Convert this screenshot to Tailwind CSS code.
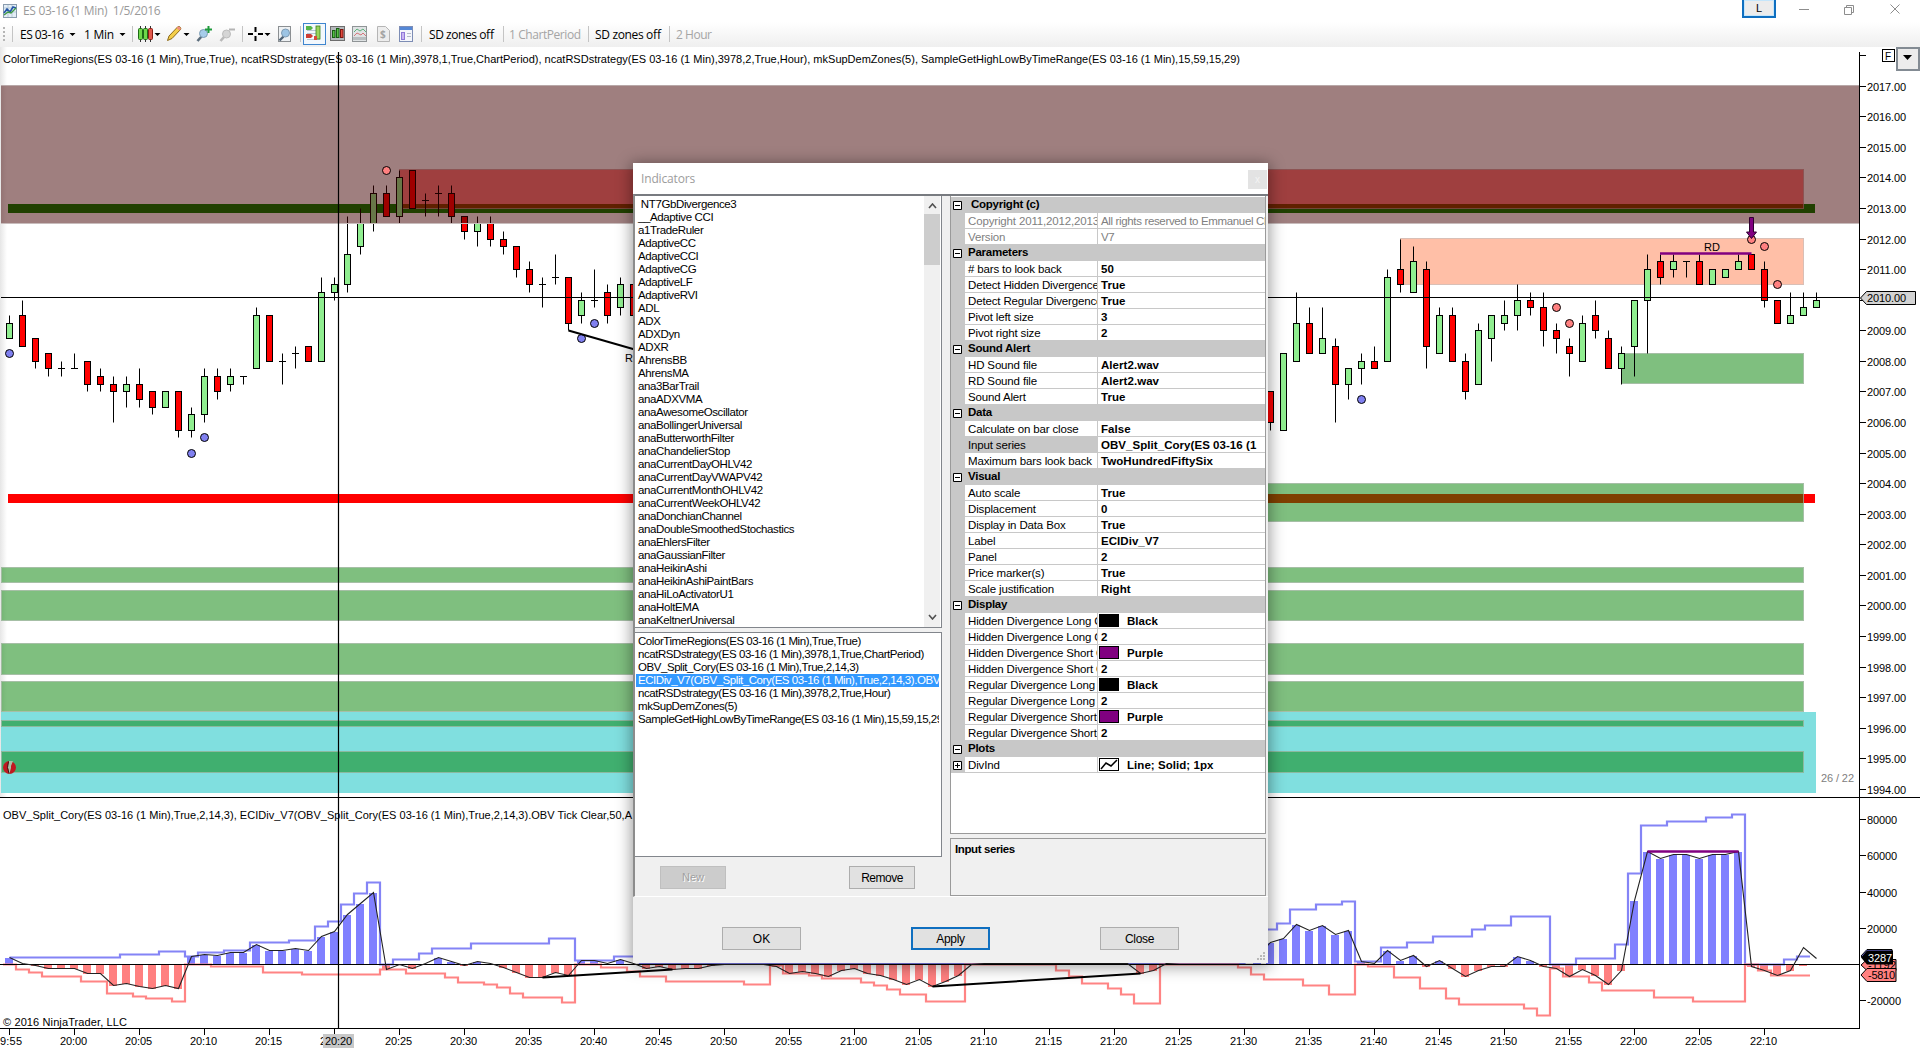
<!DOCTYPE html>
<html lang="en">
<head>
  <meta charset="UTF-8" />
  <meta name="viewport" content="width=device-width, initial-scale=1" />
  <title>ES 03-16 (1 Min)</title>
  <script src="https://cdn.jsdelivr.net/npm/@tailwindcss/browser@4"></script>
</head>
<body class="relative flex h-[1054px] w-[1920px] flex-col overflow-hidden bg-white font-['Liberation_Sans',Arial,sans-serif] text-[11px] text-black">

  <!-- Title bar -->
  <header class="flex h-[22px] shrink-0 items-start justify-between">
    <div class="flex items-center gap-[6px] pl-[3px] pt-[2px]">
      <svg width="14" height="15" viewBox="0 0 14 15">
        <rect x=".5" y="1.5" width="13" height="13" fill="#e4eef6" stroke="#8a9cae" />
        <path d="M1 5h12M1 9h12M5 2v12M9 2v12" stroke="#b9cbda" />
        <path d="M1 10l3-4 3 3 3-5 3 1" fill="none" stroke="#2456a8" stroke-width="1.6" />
        <path d="M1 12l4-3 3 1 5-5" fill="none" stroke="#3f9a45" stroke-width="1.4" />
      </svg>
      <span class="whitespace-pre font-['Open_Sans',sans-serif] text-[12px] leading-[17px] tracking-[-0.3px] text-[#9a9a9a]">ES 03-16 (1 Min)  1/5/2016</span>
    </div>
    <div class="flex items-start">
      <div class="flex h-[18px] w-[34px] items-start justify-center border-2 border-t-0 border-[#0f6fc0] bg-[#ececec] text-[11px] shadow-[inset_0_0_0_1px_#c5e6fb]">L</div>
      <svg class="ml-[22px] mt-[3px]" width="106" height="14" viewBox="0 0 106 14" fill="none" stroke="#8d8d8d">
        <path d="M1 6.500h10" />
        <path d="M46.500 4.500h7v7h-7zM48.500 4.500v-2h7v7h-2" />
        <path d="M92.500 1.500l9 9M101.500 1.500l-9 9" />
      </svg>
      <div class="w-[16px]"></div>
    </div>
  </header>

  <!-- Toolbar -->
  <nav class="flex h-[25px] shrink-0 items-center bg-linear-to-b from-white to-[#efefef] font-['Open_Sans',sans-serif] text-[12px]">
    <svg class="shrink-0" width="428" height="25" viewBox="0 0 428 25">
      <g fill="#b5b5b5">
        <rect x="3" y="5" width="2" height="2" /><rect x="3" y="9" width="2" height="2" /><rect x="3" y="13" width="2" height="2" /><rect x="3" y="17" width="2" height="2" />
      </g>
      <path d="M12.500 4v16M132.500 4v16M242.500 4v16M300.500 4v16M421.500 4v16" stroke="#c4c4c4" />
      <g fill="#000" font-family="Open Sans, sans-serif" font-size="12">
        <text x="20" y="16.500" textLength="44">ES 03-16</text>
        <text x="84" y="16.500" textLength="30">1 Min</text>
        <path d="M69.500 11h6l-3 3zM119.500 11h6l-3 3zM154.500 11h6l-3 3zM183.500 11h6l-3 3zM264.500 11h6l-3 3z" />
      </g>
      <!-- candle style -->
      <path d="M140.500 4v16M145.500 4v16M150.500 4v16" stroke="#333" />
      <rect x="138.500" y="6.500" width="4" height="11" rx="1" fill="#6fd84a" stroke="#1d6b16" />
      <rect x="143.500" y="6.500" width="4" height="11" rx="1" fill="#6fd84a" stroke="#1d6b16" />
      <rect x="148.500" y="6.500" width="4" height="11" rx="1" fill="#e2594d" stroke="#8c1d14" />
      <!-- pencil -->
      <path d="M167.500 18.500l1.500-4.500 9-9.500q2.500-.5 3 2.500l-9 9.500z" fill="#f4cf4a" stroke="#8d6a1a" />
      <path d="M178 4.500q2.500-.5 3 2.500l-1.500 1.500-3-2.500z" fill="#ef8f80" />
      <!-- zoom in, zoom out -->
      <path d="M197.500 19l4-4.500" stroke="#5b6d7c" stroke-width="2.600" />
      <circle cx="203.500" cy="11.500" r="4" fill="#a7cdea" stroke="#7f9db4" />
      <path d="M208.500 4v7M205 7.500h7" stroke="#1f9b3c" stroke-width="2" />
      <path d="M220.500 19l4-4.500" stroke="#b9b9b9" stroke-width="2.600" />
      <circle cx="226.500" cy="12" r="4" fill="#d5d5d5" stroke="#bcbcbc" />
      <path d="M229 7.500h6" stroke="#b4b4b4" stroke-width="2" />
      <!-- crosshair -->
      <path d="M255.500 5v5M255.500 14v5M248 12h5M258 12h5" stroke="#000" stroke-width="2" />
      <!-- data box lens -->
      <rect x="278.500" y="4.500" width="12" height="15" fill="#eef1f3" stroke="#8b8f92" />
      <path d="M279.500 18.500l4-4" stroke="#4d6275" stroke-width="2.400" />
      <circle cx="285.500" cy="11" r="4" fill="#9cc4e4" stroke="#7e9bb3" />
      <!-- chart trader, active -->
      <rect x="303.500" y="1.500" width="22" height="21" fill="#f3f8fd" stroke="#3f86cf" />
      <path d="M307 8.500h13M307 11.500h13M307 17.500h13" stroke="#b8c6d3" />
      <path d="M306 4h5l2 2-2 2h-5z" fill="#56b548" />
      <path d="M306 12h5l2 2-2 2h-5z" fill="#cf3c35" />
      <rect x="316" y="4" width="4" height="13" fill="#9ad45a" stroke="#3c7f1f" stroke-width=".8" />
      <rect x="314" y="14" width="3" height="4" fill="#d84a3a" />
      <!-- bars on grey -->
      <rect x="330.500" y="4.500" width="14" height="14" fill="#b5b9bc" stroke="#6d6d6d" />
      <rect x="332.500" y="8.500" width="2.500" height="7" fill="#54c044" stroke="#185d12" />
      <rect x="336.500" y="6.500" width="2.500" height="9" fill="#54c044" stroke="#185d12" />
      <rect x="340.500" y="7.500" width="2.500" height="8" fill="#e2493d" stroke="#7d1710" />
      <!-- line chart -->
      <rect x="352.500" y="4.500" width="14" height="15" fill="#dfe3e4" stroke="#8f9496" />
      <path d="M353 16.500h13" stroke="#b9bec0" stroke-width="3" />
      <path d="M354 10l3-3 3 2 3-2 3 3" fill="none" stroke="#5fb07b" />
      <path d="M354 14l3-3 4 2 2-2 3 3" fill="none" stroke="#d4767a" />
      <!-- account -->
      <path d="M377.500 4.500h8l4 4v11h-12z" fill="#ededed" stroke="#b5b5b5" />
      <text x="380" y="16" font-size="10" font-weight="700" fill="#a3a3a3">$</text>
      <!-- properties -->
      <rect x="399.500" y="4.500" width="13" height="15" fill="#f4f6fb" stroke="#7d8db5" />
      <rect x="400" y="5" width="12" height="3" fill="#5487d6" />
      <rect x="401.500" y="10.500" width="3" height="7" fill="#c9b6f2" stroke="#8f78d8" />
      <path d="M407 11.500h4M407 14.500h4" stroke="#b3b9c9" />
    </svg>
    <svg class="shrink-0" width="320" height="25" viewBox="428 0 320 25" font-family="Open Sans, sans-serif" font-size="12">
      <path d="M503.500 4v16M588.500 4v16M669.500 4v16" stroke="#c4c4c4" />
      <text x="429" y="16.500" textLength="65">SD zones off</text>
      <text x="509" y="16.500" textLength="72" fill="#a5a5a5">1 ChartPeriod</text>
      <text x="595" y="16.500" textLength="66">SD zones off</text>
      <text x="676" y="16.500" textLength="36" fill="#a5a5a5">2 Hour</text>
    </svg>
  </nav>

  <!-- Chart -->
  <main class="h-[1007px] shrink-0">
    <svg id="chart" class="block" width="1920" height="1007" viewBox="0 47 1920 1007" font-family="Liberation Sans, Arial, sans-serif" font-size="11"></svg>
  </main>

  <!-- Indicators dialog -->
  <section class="absolute left-[633px] top-[163px] flex h-[800px] w-[635px] flex-col bg-[#f0f0f0] shadow-[0_2px_14px_2px_rgba(0,0,0,0.38)]">
    <div class="flex h-[31px] shrink-0 items-center justify-between bg-white pl-[8px]">
      <span class="font-['Open_Sans',sans-serif] text-[12px] tracking-[-0.15px] text-[#9c9c9c]">Indicators</span>
      <span class="mr-[1px] mt-[2px] flex h-[19px] w-[19px] items-center justify-center bg-[#e3e3e3] text-[10px] text-[#f3f3f3]">x</span>
    </div>

    <div class="flex h-[703px] shrink-0 border-b border-l-2 border-t-2 border-b-white border-l-[#8c8c8c] border-t-[#787b80]">
      <!-- Left column: available and applied indicators -->
      <div class="flex w-[307px] shrink-0 flex-col">
        <div class="flex h-[432px] shrink-0 justify-between border-b border-r border-[#82868c] bg-white">
          <ul id="available" class="pl-[3px] pt-[2px]"></ul>
          <div class="mr-[1px] flex w-[16px] flex-col items-center bg-[#f0f0f0] py-[7px]">
            <svg width="9" height="6" viewBox="0 0 9 6" fill="none" stroke="#505050" stroke-width="1.600"><path d="M1 5l3.500-4L8 5" /></svg>
            <div class="mt-[5px] h-[51px] w-[16px] bg-[#cdcdcd]"></div>
            <svg class="mt-auto" width="9" height="6" viewBox="0 0 9 6" fill="none" stroke="#505050" stroke-width="1.600"><path d="M1 1l3.500 4L8 1" /></svg>
          </div>
        </div>
        <div class="mt-[4px] h-[225px] shrink-0 border-y border-r border-[#82868c] bg-white">
          <ul id="applied" class="w-[305px] overflow-hidden pl-[1px] pr-[1px] pt-[2px]"></ul>
        </div>
        <div class="flex justify-between pl-[25px] pr-[27px] pt-[9px]">
          <button class="h-[23px] w-[66px] border border-[#bfbfbf] bg-[#cccccc] text-[11px] text-[#a0a0a0] [text-shadow:1px_1px_0_#fff]">New</button>
          <button class="h-[23px] w-[66px] border border-[#adadad] bg-[#e1e1e1] text-[12px] tracking-[-0.5px]">Remove</button>
        </div>
      </div>

      <!-- Right column: property grid -->
      <div class="ml-[8px] flex w-[316px] flex-col">
        <div class="h-[638px] shrink-0 border border-t-0 border-[#9a9a9a] bg-white pt-[1px]">
          <div id="props"></div>
        </div>
        <div class="mt-[4px] h-[58px] shrink-0 border border-[#9a9a9a] pl-[4px] pt-[2px] text-[11.5px] font-bold tracking-[-0.4px]">Input series</div>
      </div>
    </div>

    <div class="relative flex justify-between pl-[89px] pr-[89px] pt-[30px] text-[12px]">
      <button class="h-[23px] w-[79px] border border-[#adadad] bg-[#e1e1e1]">OK</button>
      <button class="h-[23px] w-[79px] border-2 border-[#0f6fc0] bg-[#e1e1e1] tracking-[-0.3px]">Apply</button>
      <button class="h-[23px] w-[79px] border border-[#adadad] bg-[#e1e1e1] tracking-[-0.3px]">Close</button>
      <svg class="absolute right-[2px] top-[55px]" width="9" height="9" viewBox="0 0 9 9" fill="#b8b8b8">
        <rect x="6" y="0" width="2" height="2" /><rect x="3" y="3" width="2" height="2" /><rect x="6" y="3" width="2" height="2" />
        <rect x="0" y="6" width="2" height="2" /><rect x="3" y="6" width="2" height="2" /><rect x="6" y="6" width="2" height="2" />
      </svg>
    </div>
  </section>

<script>
// ---------- Dialog lists ----------
const available = [' NT7GbDivergence3', '__Adaptive CCI', 'a1TradeRuler', 'AdaptiveCC', 'AdaptiveCCI', 'AdaptiveCG', 'AdaptiveLF',
  'AdaptiveRVI', 'ADL', 'ADX', 'ADXDyn', 'ADXR', 'AhrensBB', 'AhrensMA', 'ana3BarTrail', 'anaADXVMA', 'anaAwesomeOscillator',
  'anaBollingerUniversal', 'anaButterworthFilter', 'anaChandelierStop', 'anaCurrentDayOHLV42', 'anaCurrentDayVWAPV42',
  'anaCurrentMonthOHLV42', 'anaCurrentWeekOHLV42', 'anaDonchianChannel', 'anaDoubleSmoothedStochastics', 'anaEhlersFilter',
  'anaGaussianFilter', 'anaHeikinAshi', 'anaHeikinAshiPaintBars', 'anaHiLoActivatorU1', 'anaHoltEMA', 'anaKeltnerUniversal'];
document.getElementById('available').innerHTML = available.map(t =>
  `<li class="h-[13px] whitespace-pre text-[11.5px] leading-[13px] tracking-[-0.38px]">${t}</li>`).join('');

const applied = ['ColorTimeRegions(ES 03-16 (1 Min),True,True)', 'ncatRSDstrategy(ES 03-16 (1 Min),3978,1,True,ChartPeriod)',
  'OBV_Split_Cory(ES 03-16 (1 Min),True,2,14,3)', 'ECIDiv_V7(OBV_Split_Cory(ES 03-16 (1 Min),True,2,14,3).OBV',
  'ncatRSDstrategy(ES 03-16 (1 Min),3978,2,True,Hour)', 'mkSupDemZones(5)', 'SampleGetHighLowByTimeRange(ES 03-16 (1 Min),15,59,15,29'];
document.getElementById('applied').innerHTML = applied.map((t, i) =>
  `<li class="h-[13px] overflow-hidden whitespace-pre pl-[2px] text-[11.5px] leading-[13px] tracking-[-0.44px] ${i === 3 ? 'bg-[#3399ff] text-white' : ''}">${t}</li>`).join('');

// A plain string opens a category, an array is [name, value, swatch]
const props = [' Copyright (c)', ['Copyright 2011,2012,2013', 'All rights reserved to Emmanuel Chri', 'off'], ['Version', 'V7', 'off'],
  'Parameters', ['# bars to look back', '50'], ['Detect Hidden Divergence', 'True'], ['Detect Regular Divergence', 'True'],
  ['Pivot left size', '3'], ['Pivot right size', '2'],
  'Sound Alert', ['HD Sound file', 'Alert2.wav'], ['RD Sound file', 'Alert2.wav'], ['Sound Alert', 'True'],
  'Data', ['Calculate on bar close', 'False'], ['Input series', 'OBV_Split_Cory(ES 03-16 (1'], ['Maximum bars look back', 'TwoHundredFiftySix'],
  'Visual', ['Auto scale', 'True'], ['Displacement', '0'], ['Display in Data Box', 'True'], ['Label', 'ECIDiv_V7'], ['Panel', '2'],
  ['Price marker(s)', 'True'], ['Scale justification', 'Right'],
  'Display', ['Hidden Divergence Long C', 'Black', 'black'], ['Hidden Divergence Long C', '2'],
  ['Hidden Divergence Short C', 'Purple', 'purple'], ['Hidden Divergence Short C', '2'],
  ['Regular Divergence Long', 'Black', 'black'], ['Regular Divergence Long', '2'],
  ['Regular Divergence Short', 'Purple', 'purple'], ['Regular Divergence Short', '2'],
  'Plots', ['DivInd', 'Line; Solid; 1px', 'line']];
const box = plus => `<svg width="9" height="9" viewBox="0 0 9 9" fill="#fff" stroke="#000"><path d="M.5.5h8v8h-8zM2 4.500h5${plus ? 'M4.500 2v5' : ''}" /></svg>`;
const swatch = {
  black: '<span class="mr-[8px] h-[13px] w-[20px] shrink-0 bg-black"></span>',
  purple: '<span class="mr-[8px] h-[13px] w-[20px] shrink-0 border border-black bg-[#800080]"></span>',
  line: '<svg class="mr-[8px] shrink-0" width="20" height="13" viewBox="0 0 20 13"><rect x=".5" y=".5" width="19" height="12" fill="#fff" stroke="#000"/><path d="M2 11l5-6 5 3 6-6" fill="none" stroke="#000" stroke-width="1.500"/></svg>'
};
document.getElementById('props').innerHTML = props.map(p => {
  if (typeof p === 'string') {
    return `<div class="flex h-[16px] items-center bg-[#c8c8c8] pl-[2px]">${box(false)}<span class="ml-[6px] whitespace-pre text-[11.5px] font-bold tracking-[-0.25px]">${p}</span></div>`;
  }
  const [name, value, kind] = p;
  return `<div class="flex h-[16px]">
    <div class="flex w-[14px] shrink-0 items-center bg-[#c8c8c8] pl-[2px]">${name === 'DivInd' ? box(true) : ''}</div>
    <div class="w-[133px] shrink-0 overflow-hidden whitespace-nowrap border-b border-r border-[#c8c8c8] pl-[3px] text-[11.5px] leading-[16px] tracking-[-0.15px] ${name === 'Input series' ? 'bg-[#c8c8c8]' : ''} ${kind === 'off' ? 'text-[#808080]' : ''}">${name}</div>
    <div class="flex grow items-center overflow-hidden whitespace-nowrap border-b border-[#c8c8c8] text-[11.5px] leading-[16px] ${kind === 'off' ? 'tracking-[-0.35px] text-[#808080]' : 'font-bold tracking-[0.05px]'} ${swatch[kind] ? 'pl-[1px]' : 'pl-[3px]'}">${swatch[kind] || ''}${value}</div>
  </div>`;
}).join('');

// ---------- Chart ----------
const X = m => 74.5 + 13 * m;                                  // minutes after 20:00
const Y = p => Math.round(85.7 + (2017 - p) * 30.57) + 0.5;    // price panel
const V = v => 964.5 - v;                                      // volume panel, px above zero
const out = [];
const rect = (x1, y1, x2, y2, fill, extra = '') => out.push(`<rect x="${x1}" y="${y1}" width="${x2 - x1}" height="${y2 - y1}" fill="${fill}" shape-rendering="crispEdges" ${extra}/>`);
const line = (x1, y1, x2, y2, c = '#000', w = 1) => out.push(`<line x1="${x1}" y1="${y1}" x2="${x2}" y2="${y2}" stroke="${c}" stroke-width="${w}"/>`);
const text = (x, y, s, w, extra = '') => out.push(`<text x="${x}" y="${y}" ${w ? `textLength="${w}"` : ''} ${extra}>${s}</text>`);

// Zones
out.push('<defs><linearGradient id="edge"><stop offset="0" stop-color="#e6e6e6"/><stop offset="1" stop-color="#fff"/></linearGradient></defs>');
rect(0, 47, 7, 797, 'url(#edge)');
rect(8, 204, 1815, 213, '#008000');
rect(8, 494, 1815, 503, '#ff0000');
rect(1, 712, 1816, 793, '#80dfdf');
const zone = (x1, y1, x2, y2, c) => {
  rect(x1, y1, x2, y2, c, 'fill-opacity="0.5"');
  out.push(`<rect x="${x1 + .5}" y="${y1 + .5}" width="${x2 - x1 - 1}" height="${y2 - y1 - 1}" fill="none" stroke="#c0c0c0" stroke-opacity="0.6"/>`);
};
zone(399, 169, 1804, 209, '#ff0000');
zone(1400, 238, 1804, 285, '#ff7f50');
zone(1621, 353, 1804, 384, '#008000');
zone(1000, 483, 1804, 522, '#008000');
[[567, 583], [590, 621], [643, 675], [681, 712], [720, 727], [751, 773]].forEach(([a, b]) => zone(1, a, 1804, b, '#008000'));

// Candles: minute, high, open, close, low
const candles = [
  [-5,2009.5,2008.75,2009.25,2008.75],[-4,2010,2009.5,2008.5,2008.5],[-3,2008.75,2008.75,2008,2007.75],[-2,2008.25,2008.25,2007.75,2007.5],
  [-1,2008,2007.75,2007.75,2007.5],[0,2008.25,2007.75,2007.75,2007.75],[1,2008,2008,2007.25,2007],[2,2007.75,2007.5,2007.25,2007],
  [3,2007.5,2007.25,2007,2006],[4,2007.5,2007,2007.25,2006.5],[5,2007.75,2007.25,2006.75,2006.5],[6,2007,2007,2006.5,2006.25],
  [7,2007,2006.5,2007,2006.5],[8,2007,2007,2005.75,2005.5],[9,2006.5,2005.75,2006.25,2005.5],[10,2007.75,2006.25,2007.5,2006],
  [11,2007.75,2007.5,2007,2006.75],[12,2007.75,2007.25,2007.5,2007],[13,2007.5,2007.5,2007.5,2007.25],[14,2009.75,2007.75,2009.5,2007.75],
  [15,2009.5,2009.5,2008,2008],[16,2008.25,2008,2008,2007.25],[17,2008.5,2008.25,2008.25,2007.75],[18,2008.5,2008.5,2008,2008],
  [19,2010.75,2008,2010.25,2008],[20,2010.75,2010.25,2010.5,2010],[21,2012.75,2010.5,2011.5,2010.25],[22,2013,2011.75,2012.5,2011.5],
  [23,2013.75,2012.5,2013.5,2012.25],[24,2013.75,2013.5,2012.75,2012.75],[25,2014.25,2012.75,2014,2012.5],[26,2014.25,2014.25,2013,2013],
  [27,2013.5,2013.25,2013.25,2012.75],[28,2013.75,2013.5,2013.5,2012.75],[29,2013.75,2013.5,2012.75,2012.5],[30,2012.75,2012.75,2012.25,2012],
  [31,2012.75,2012.25,2012.5,2011.75],[32,2012.75,2012.5,2012,2011.75],[33,2012.25,2012,2011.75,2011.5],[34,2011.75,2011.75,2011,2010.75],
  [35,2011.25,2011,2010.5,2010.25],[36,2010.75,2010.5,2010.5,2009.75],[37,2011.5,2010.75,2010.75,2010.5],[38,2010.75,2010.75,2009.25,2009],
  [39,2010.25,2009.5,2010,2009.25],[40,2011,2010,2010,2009.75],[41,2010.5,2010.25,2009.5,2009.25],[42,2010.75,2009.75,2010.5,2009.5],
  [43,2010.5,2010.5,2009.5,2009.5],
  [92,2007,2007,2006,2005.75],[93,2008.25,2005.75,2008.25,2005.75],[94,2010.25,2008,2009.25,2008],[95,2009.75,2009.25,2008.25,2008.25],
  [96,2009.75,2008.25,2008.75,2008.25],[97,2008.75,2008.5,2007.25,2006],[98,2007.75,2007.25,2007.75,2006.75],[99,2008.25,2007.75,2008,2007.25],
  [100,2008.5,2008,2007.75,2007.75],[101,2011,2008,2010.75,2008],[102,2012,2011,2010.5,2010.25],[103,2011.75,2010.25,2011.25,2010.25],
  [104,2011.25,2011,2008.5,2007.75],[105,2009.75,2008.25,2009.5,2008.25],[106,2009.75,2009.5,2008,2008],[107,2008.25,2008,2007,2006.75],
  [108,2009.25,2007.25,2009,2007.25],[109,2009.5,2008.75,2009.5,2008],[110,2010,2009.25,2009.5,2009],[111,2010.5,2009.5,2010,2009],
  [112,2010.25,2010,2009.75,2009.5],[113,2010.25,2009.75,2009,2008.5],[114,2009.25,2009,2008.75,2008.25],[115,2008.75,2008.5,2008.25,2007.5],
  [116,2009.5,2008,2009.25,2008],[117,2010,2009.5,2009,2008.75],[118,2009,2008.75,2007.75,2007.75],[119,2008.5,2007.75,2008.25,2007.25],
  [120,2010,2008.5,2010,2007.5],[121,2011.5,2010,2011,2008.25],[122,2011.5,2011.25,2010.75,2010.5],[123,2011.5,2011,2011.25,2010.75],
  [124,2011.25,2011.25,2011.25,2010.75],[125,2011.5,2011.25,2010.5,2010.5],[126,2011,2010.5,2011,2010.5],[127,2011,2010.75,2011,2010.75],
  [128,2011.5,2011,2011.25,2011],[129,2011.5,2011.5,2011,2011],[130,2011.25,2011,2010,2009.75],[131,2010,2010,2009.25,2009.25],
  [132,2010.25,2009.25,2009.5,2009.25],[133,2010.25,2009.5,2009.75,2009.5],[134,2010.25,2009.75,2010,2009.75]];
candles.forEach(([m, h, o, c, l]) => {
  const x = X(m);
  line(x, Y(h), x, Y(l));
  if (o === c) line(x - 3.5, Y(o), x + 3.5, Y(o));
  else out.push(`<rect x="${x - 3}" y="${Y(Math.max(o, c))}" width="6" height="${Y(Math.min(o, c)) - Y(Math.max(o, c))}" fill="${c > o ? '#90ee90' : '#ff0000'}" stroke="#000"/>`);
});

// Session region over the candles
rect(1, 85, 1859, 223, '#400000', 'fill-opacity="0.5"');
line(1, 85.5, 1859, 85.5, '#b8a8a8');
line(1, 223.5, 1859, 223.5, '#c8bcbc');

// Swing dots
const dot = (m, p, c) => out.push(`<circle cx="${X(m)}" cy="${Y(p)}" r="4" fill="${c}" stroke="#000"/>`);
[[-5,2008.25],[9,2005],[10,2005.5],[39,2008.75],[40,2009.25],[99,2006.75]].forEach(([m, p]) => dot(m, p, '#8080f0'));
[[24,2014.25],[114,2009.75],[115,2009.25],[129,2012],[130,2011.75],[131,2010.5]].forEach(([m, p]) => dot(m, p, '#ff8080'));

// Divergence on price
line(568.5, 330.5, 640, 351, '#000', 2);
text(625, 362, 'RD');
line(X(122) - .5, 253.5, X(129), 253.5, '#800080', 2.4);
text(1704, 251, 'RD', 16);
out.push('<path d="M1749.500 217.500h4v14.500h3l-5 6.500-5-6.500h3z" fill="#800080" stroke="#300030"/>');

// Marker at lower left
out.push('<ellipse cx="9.500" cy="767.500" rx="6.500" ry="6.500" fill="#c01820"/><path d="M9 761l4 0-2 5 0 2-2 7-.5-5-1-3z" fill="#a9bfa4"/><path d="M8.500 761.500l-1 6 1.500 6" fill="none" stroke="#401010"/>');

// Volume panel
const obv = [7,1,-1,-4,-4,-4,-9,-9,-21,-19,-22,-24,-21,-24,8,10,9,12,12,20,14,14,16,14,28,33,50,61,72,-5,0,-4,1,7,3,-1,3,1,-3,-8,-13,-13,-8,-11,
  4,4,1,5,1,-4,-2,-5,-4,-4,-1,0,0,0,0,-2,-9,-7,-9,-12,-6,-4,-9,-11,-15,-20,-15,-22,-17,-11,0];
const series = obv.map((v, i) => [i - 5, v]);
for (let m = 70; m < 82; m++) series.push([m, 1]);
series.push([82,-9],[83,-6],[84,1],[91,8]);
[22,26,40,34,39,30,34,3,1,14,4,9,-2,4,-4,-12,-6,-2,-2,8,4,-2,-4,-12,-5,-11,-20,-6,64,113,106,110,110,106,110,110,113,-2,-6,-11,-6,17,6]
  .forEach((v, i) => series.push([92 + i, v]));
series.forEach(([m, v]) => {
  if (m > 132) return;
  if (v > 0) rect(X(m) - 4.5, Math.round(V(v)), X(m) + 3.5, 964, '#8080ff');
  else if (v < 0) rect(X(m) - 4.5, 964, X(m) + 3.5, Math.round(V(v)), '#ff8080');
});
rect(1799, 964, 1807, 966, '#ff8080');

// Stepped extremes: [start minute, value]
const steps = (list, end, c) => {
  let d = `M${X(list[0][0])} ${V(list[0][1])}`;
  list.slice(1).forEach(([m, v]) => { d += `H${X(m)}V${V(v)}`; });
  out.push(`<path d="${d}H${X(end)}" fill="none" stroke="${c}" stroke-width="2.200"/>`);
};
steps([[-5,7],[3.5,10],[6.5,13],[8.5,8],[9.5,12],[11.5,14],[13.5,22],[16.5,24],[18.5,38],[19.5,43],[20.5,60],[21.5,71],[22.5,82],[23.5,0],
  [24.5,5],[26.5,11],[27.5,16],[30.5,21],[36.5,26],[38.5,4],[41.5,8],[43.5,1],[90,35],[92.5,41],[93.5,55],[95.5,60],[97.5,63],[98.5,3],
  [100.5,17],[102.5,22],[104.5,28],[107.5,35],[108.5,39],[110.5,48],[113.5,0],[115.5,6],[118.5,20],[119.5,91],[120.5,139],[122.5,143],
  [125.5,147],[127.5,150],[128.5,0],[131.5,5],[132.5,8]], 133.5, '#8484f6');
steps([[-5.5,0],[-4.5,-5],[-3.5,-8],[-2.5,-12],[0.5,-17],[2.5,-29],[4.5,-32],[5.5,-34],[7.5,-37],[8.5,0],[10.5,-2],[14.5,-8],[17.5,-10],
  [23.5,-5],[25.5,-9],[28.5,-13],[29.5,-18],[31.5,-20],[32.5,-23],[33.5,-29],[34.5,-33],[37.5,-38],[38.5,0],[40.5,-3],[42.5,-7],
  [43.5,-12],[45.5,-17],[51.5,-20],[53.5,-1],[54.5,-9],[56.5,-11],[57.5,-14],[60.5,-18],[61.5,-21],[62.5,-25],[63.5,-30],[65.5,-37],
  [68.5,0],[75.5,-6],[76.5,-12],[77.5,-19],[79.5,-24],[80.5,-30],[81.5,-39],[83.5,0],[89.5,-3],[90.5,-10],[91.5,-15],[94.5,-21],
  [96.5,-30],[98.5,0],[99.5,-2],[101.5,-13],[103.5,-24],[105.5,-34],[106.5,-40],[111.5,-44],[112.5,-51],[113.5,-4],[114.5,-12],
  [116.5,-18],[117.5,-26],[121.5,-33],[124.5,-37],[128.5,0],[129.5,-6],[130.5,-11]], 133.5, '#ff8484');
line(0, 964.5, 1859, 964.5, '#000', 1.2);
out.push(`<polyline points="${series.map(([m, v]) => X(m) + ',' + V(v)).join(' ')}" fill="none" stroke="#222" stroke-width="1.100"/>`);
line(X(36), V(-13), X(46), V(-5), '#000', 2);
line(X(66), V(-22), X(82), V(-9), '#000', 2);
line(X(121), V(113), X(128), V(113), '#800080', 2.4);

// Axes
line(1859.5, 52, 1859.5, 1029, '#000');
line(0, 797.5, 1920, 797.5);
line(0, 1028.5, 1860, 1028.5);
line(1859, 55.5, 1866, 55.5);
for (let p = 1994; p <= 2017; p++) {
  line(1859, Y(p), 1866, Y(p));
  if (p !== 2010) text(1867, Y(p) + 4, p + '.00', 39);
}
[[80000, 819.5], [60000, 855.5], [40000, 892.5], [20000, 928.5], [-20000, 1000.5]].forEach(([v, y]) => {
  line(1859, y, 1866, y);
  text(1867, y + 4, v, v < 0 ? 34 : 30);
});
for (let m = -5; m <= 130; m += 5) {
  line(X(m), 1028, X(m), 1035);
  const h = 20 + Math.floor(m / 60), mm = String((m + 60) % 60).padStart(2, '0');
  if (m === -5) text(0, 1045, '9:55', 22);
  else text(X(m) - 14.5, 1045, h + ':' + mm, 27);
}

// Crosshair and its labels
line(338.5, 52, 338.5, 1028, '#000', 1.2);
line(1, 297.5, 1859, 297.5, '#000', 1.2);
rect(323, 1034, 354, 1048, '#c8c8c8');
text(325, 1045, '20:20', 27);
out.push('<path d="M1860.500 298l6-6.500h49v13h-49z" fill="#d3d3d3" stroke="#000"/>');
text(1867, 302, '2010.00', 39);

// Value markers
out.push('<path d="M1861 965l6-5.500h29v11h-29z" fill="#ff8080" stroke="#000"/>');
text(1868, 969, '-1192', 28);
out.push('<path d="M1861 975l6-6.500h29v13h-29z" fill="#ff8080" stroke="#000"/>');
text(1868, 979, '-5810', 27);
out.push('<path d="M1861 956l6-6.500h25v13h-25z" fill="#8080ff" stroke="#000"/><path d="M1861 957.500l6-7h26v14h-26z" fill="#000"/>');
text(1868, 962, '3287', 24, 'fill="#fff"');

// Panel captions
text(3, 63, 'ColorTimeRegions(ES 03-16 (1 Min),True,True), ncatRSDstrategy(ES 03-16 (1 Min),3978,1,True,ChartPeriod), ncatRSDstrategy(ES 03-16 (1 Min),3978,2,True,Hour), mkSupDemZones(5), SampleGetHighLowByTimeRange(ES 03-16 (1 Min),15,59,15,29)', 1237);
text(3, 819, 'OBV_Split_Cory(ES 03-16 (1 Min),True,2,14,3), ECIDiv_V7(OBV_Split_Cory(ES 03-16 (1 Min),True,2,14,3).OBV Tick Clear,50,A', 629);
text(3, 1026, '© 2016 NinjaTrader, LLC', 124);
text(1821, 782, '26 / 22', 33, 'fill="#808080"');

// Fixed-scale badge and drop-down
out.push('<rect x="1882.500" y="49.500" width="12" height="12" fill="#fff" stroke="#000"/>');
text(1885, 59.5, 'F', 0, 'font-size="10"');
out.push('<rect x="1897" y="48" width="22" height="22" fill="#ececec" stroke="#838b93" stroke-width="2"/><path d="M1903 55h9l-4.500 5z"/>');

document.getElementById('chart').innerHTML = out.join('');
</script>

</body>
</html>
